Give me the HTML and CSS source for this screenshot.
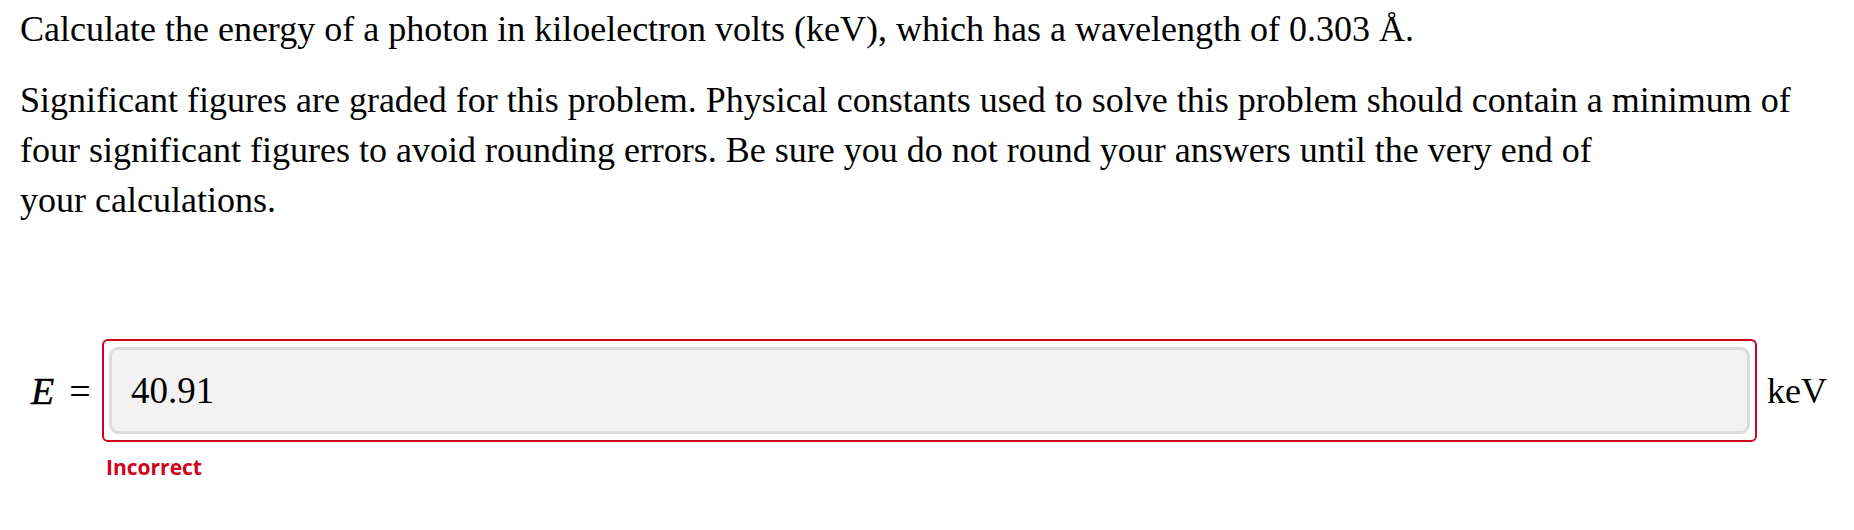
FILE: index.html
```html
<!DOCTYPE html>
<html lang="en">
<head>
<meta charset="utf-8">
<title>Photon energy</title>
<link rel="stylesheet" href="styles.css">
</head>
<body>
<main class="question">
  <p class="prompt">Calculate the energy of a photon in kiloelectron volts (keV), which has a wavelength of 0.303 Å.</p>
  <p class="prompt">Significant figures are graded for this problem. Physical constants used to solve this problem should contain a minimum of four significant figures to avoid rounding errors. Be sure you do not round your answers until the very end of<br>your calculations.</p>

  <div class="answer">
    <div class="answer-row">
      <span class="math"><span class="var">E</span><span class="eq">=</span></span>
      <div class="field incorrect">
        <input class="field-input" type="text" value="40.91" readonly>
      </div>
      <span class="unit">keV</span>
    </div>
    <div class="feedback">Incorrect</div>
  </div>
</main>
</body>
</html>
```

FILE: styles.css
```css
html, body {
  margin: 0;
  padding: 0;
  background: #ffffff;
}

.question {
  padding: 4px 27px 0 20px;
  font-family: "Liberation Serif", "Times New Roman", serif;
  font-size: 36px;
  line-height: 50px;
  color: #000;
}

.prompt {
  margin: 0 0 21px 0;
}

.answer {
  margin-top: 114px;
}

.answer-row {
  display: flex;
  align-items: center;
}

.math {
  display: flex;
  align-items: baseline;
  padding-left: 11px;
  font-family: "Liberation Serif", "Times New Roman", serif;
  font-size: 38px;
  width: 71px;
}

.var {
  font-style: italic;
  -webkit-text-stroke: 0.5px #000;
}

.eq {
  margin-left: 15px;
}

.field {
  flex: 1;
  border: 2px solid #d0021b;
  border-radius: 6px;
  padding: 6px 5px;
}

.field-input {
  display: block;
  box-sizing: border-box;
  width: 100%;
  height: 87px;
  margin: 0;
  border: 3px solid #dcdcdc;
  border-radius: 9px;
  background: #f2f2f2;
  padding: 0 19px;
  font-family: "Liberation Serif", "Times New Roman", serif;
  font-size: 37px;
  color: #000;
  outline: none;
}

.unit {
  margin-left: 10px;
}

.feedback {
  margin: 10px 0 0 86px;
  font-family: "Open Sans", "Noto Sans", sans-serif;
  font-weight: 700;
  font-size: 21px;
  line-height: 30px;
  color: #d0021b;
}
```
